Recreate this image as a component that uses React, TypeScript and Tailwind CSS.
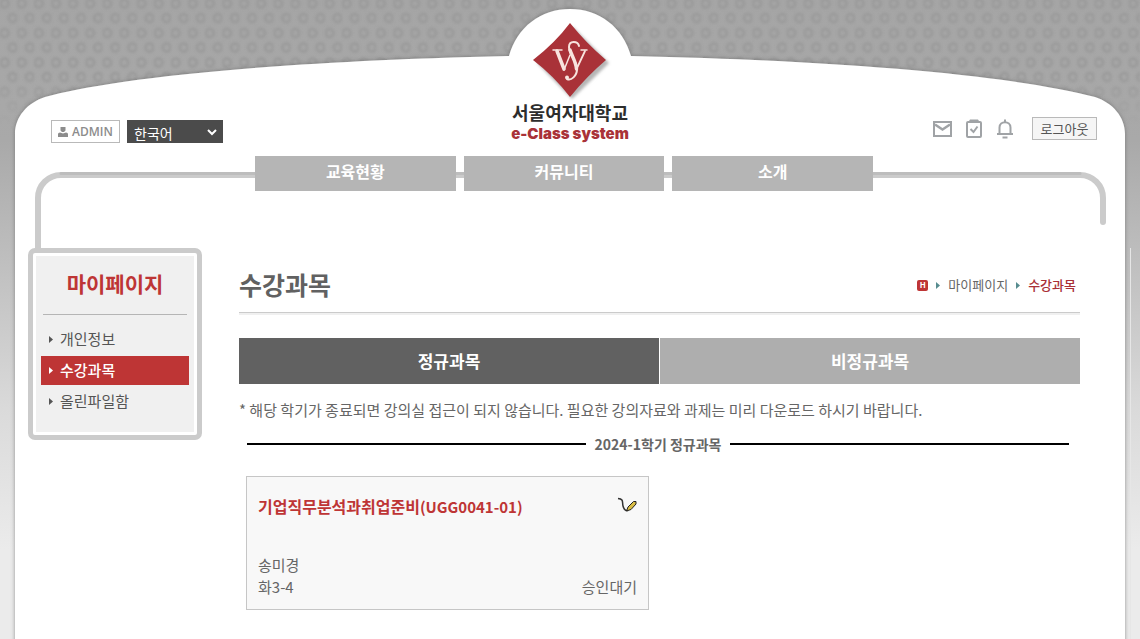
import { useState } from "react";

interface ICourse {
  id: string;
  name: string;
  professor: string;
  time: string;
  status: string;
}

const NAV_ITEMS = ["교육현황", "커뮤니티", "소개"];
const SIDE_ITEMS = ["개인정보", "수강과목", "올린파일함"];
const TABS = ["정규과목", "비정규과목"];

const COURSES: ICourse[] = [
  {
    id: "UGG0041-01",
    name: "기업직무분석과취업준비",
    professor: "송미경",
    time: "화3-4",
    status: "승인대기",
  },
];

const Backdrop = () => (
  <svg
    className="absolute inset-0 h-full w-full"
    viewBox="0 0 1140 639"
    preserveAspectRatio="none"
    aria-hidden="true"
  >
    <defs>
      <linearGradient id="side" x1="0" y1="0" x2="0" y2="1">
        <stop offset="0" stopColor="#a5a5a5" />
        <stop offset="0.22" stopColor="#a9a9a9" />
        <stop offset="0.42" stopColor="#c0c0c0" />
        <stop offset="0.64" stopColor="#dadada" />
        <stop offset="0.86" stopColor="#ebebeb" />
      </linearGradient>
      <linearGradient id="fade" x1="0" y1="0" x2="0" y2="1">
        <stop offset="0.6" stopColor="#fff" />
        <stop offset="1" stopColor="#000" />
      </linearGradient>
      <pattern id="rings" width="17.1" height="29.5" patternUnits="userSpaceOnUse">
        <g fill="none" stroke="#9b9b9b" strokeWidth="3">
          <circle cx="4.6" cy="5.500" r="4" />
          <circle cx="12.7" cy="20" r="4" />
        </g>
      </pattern>
      <mask id="ringFade">
        <rect width="1140" height="125" fill="url(#fade)" />
      </mask>
      <filter id="soft">
        <feGaussianBlur stdDeviation="0.8" />
      </filter>
      <filter id="edge" x="-5%" y="-5%" width="110%" height="110%">
        <feDropShadow dx="0" dy="0" stdDeviation="2" floodColor="#555" floodOpacity="0.6" />
      </filter>
    </defs>
    <rect width="1140" height="639" fill="url(#side)" />
    <g mask="url(#ringFade)">
      <rect y="-2" width="1140" height="127" fill="url(#rings)" filter="url(#soft)" transform="translate(0 -2)" />
    </g>
    <path
      filter="url(#edge)"
      fill="#fff"
      d="M15 660V134C15 117 27 103 45 97C100 82 240 62 509 56C517 27 541 9 570 9S623 27 631 56C900 62 1040 82 1095 97C1113 103 1125 117 1125 134V660Z"
    />
    <path d="M1130.500 248V639" stroke="#e6e6e6" strokeWidth="1" />
    <g fill="none" strokeLinecap="round">
      <path d="M38 260V198A23 23 0 0 1 61 175H1080A23 23 0 0 1 1103 198V222" stroke="#cbcbcb" strokeWidth="6" />
      <path d="M61 173.500H1080" stroke="#bdbdbd" strokeWidth="3" />
    </g>
  </svg>
);

const Logo = () => (
  <a href="#" className="flex flex-col items-center" aria-label="서울여자대학교 e-Class system">
    <svg width="84" height="83" viewBox="0 0 84 83" aria-hidden="true">
      <defs>
        <filter id="logoShadow">
          <feGaussianBlur stdDeviation="1.500" />
        </filter>
      </defs>
      <path d="M45 8L81 44L44 80L9 44Z" fill="#b5b5b5" filter="url(#logoShadow)" />
      <path d="M42 4Q58 24 78 41Q59 57 42 78Q26 57 5 41Q27 24 42 4Z" fill="#a93238" />
      <g fill="none" stroke="#f8e4de" strokeLinecap="round">
        <path d="M25 31H34M53 31H59" strokeWidth="1.500" />
        <path d="M29 32L36 50" strokeWidth="3.500" />
        <path d="M36 51L42 36" strokeWidth="1.500" />
        <path d="M51 27C50 22 41 21 41 28C41 36 49 42 49 50C49 57 43 62 39 60" strokeWidth="2" />
        <path d="M42 31C44 37 48 43 48.500 50" strokeWidth="3.500" />
        <path d="M49 49L57 32" strokeWidth="1.800" />
      </g>
      <circle cx="39" cy="58.500" r="2" fill="#f8e4de" />
    </svg>
    <span className="text-[18px] font-bold leading-[20px] text-[#2d2d2d]">서울여자대학교</span>
    <span className="font-[Inter,sans-serif] text-[15px] font-black leading-[24px] text-[#a93238]">
      e-Class system
    </span>
  </a>
);

const Arrow = ({ className }: { className: string }) => (
  <svg className={className} width="4" height="7" viewBox="0 0 4 7" fill="currentColor" aria-hidden="true">
    <path d="M0 0L4 3.500L0 7Z" />
  </svg>
);

const Header = () => (
  <header className="flex h-[148px] items-start justify-between px-[43px]">
    <div className="flex flex-1 gap-[7px] pt-[120px]">
      <button className="ml-2 flex h-[23px] w-[69px] items-center justify-center gap-1 border border-[#b9b9b9] bg-white font-['Open_Sans',sans-serif] text-[12px] font-semibold text-[#8c8c8c]">
        <svg width="10" height="10" viewBox="0 0 10 10" fill="currentColor" aria-hidden="true">
          <path d="M2.500 0H7.500V3.500L6 5H4L2.500 3.500ZM0 10V7Q0 5.500 2 5.500L5 6.500L8 5.500Q10 5.500 10 7V10Z" />
        </svg>
        ADMIN
      </button>
      <div className="relative h-[23px]">
        <select
          aria-label="언어"
          className="block h-[23px] w-[96px] appearance-none bg-[#4b4b4b] pl-[7px] pt-[2px] text-[14px] leading-[20px] text-white"
        >
          <option>한국어</option>
        </select>
        <svg className="pointer-events-none absolute right-[6px] top-[9px]" width="10" height="7" viewBox="0 0 10 7" aria-hidden="true">
          <path d="M1 1L5 5L9 1" fill="none" stroke="#fff" strokeWidth="2" />
        </svg>
      </div>
    </div>
    <div className="pt-[19px]">
      <Logo />
    </div>
    <div className="flex flex-1 items-center justify-end gap-[13px] pt-[117px] text-[#a0a3a6]">
      <button aria-label="쪽지">
        <svg width="19" height="16" viewBox="0 0 19 16" fill="none" stroke="currentColor" strokeWidth="2" aria-hidden="true">
          <path d="M1 1H18V15H1Z" />
          <path d="M2 3.500L9.500 8.500L17 3.500" strokeWidth="2.500" />
        </svg>
      </button>
      <button aria-label="할 일">
        <svg width="18" height="20" viewBox="0 0 18 20" fill="none" stroke="currentColor" strokeWidth="2" aria-hidden="true">
          <rect x="2" y="3" width="14" height="15" rx="1" />
          <path d="M5.500 10L8.500 13L12.500 7.500" />
          <path d="M5 0.500H13L15 3.500H3Z" fill="currentColor" stroke="none" />
        </svg>
      </button>
      <button aria-label="알림">
        <svg width="18" height="20" viewBox="0 0 18 20" fill="none" stroke="currentColor" strokeWidth="2" aria-hidden="true">
          <path d="M1 15H17M3.500 15V8.500C3.500 1.500 14.500 1.500 14.500 8.500V15M9 0.500V3" />
          <path d="M6.500 18.500H11.500" />
        </svg>
      </button>
      <button className="ml-[5px] h-[23px] w-[65px] border border-[#b9b9b9] bg-[#f5f5f5] text-[13px] leading-[18px] text-[#555]">
        로그아웃
      </button>
    </div>
  </header>
);

const App = () => {
  const [tab, setTab] = useState(TABS[0]);
  const [menu, setMenu] = useState(SIDE_ITEMS[1]);

  return (
    <div className="relative min-h-screen overflow-hidden font-['Noto_Sans_CJK_KR',sans-serif] text-[#666]">
      <Backdrop />
      <div className="relative">
        <Header />
        <nav className="mt-2 flex gap-2 pl-[255px] pr-[267px]">
          {NAV_ITEMS.map((item) => (
            <a
              key={item}
              href="#"
              className="h-[35px] flex-1 bg-[#b5b5b5] text-center text-[16px] font-bold leading-[30px] text-white"
            >
              {item}
            </a>
          ))}
        </nav>

        <div className="flex items-start gap-[37px] pl-7 pr-[60px] pt-[57px]">
          <aside className="w-[174px] shrink-0 rounded-[7px] border-[5px] border-[#cbcbcb] bg-white p-[3px]">
            <div className="bg-[#f0f0f0] px-[5px] pb-4">
              <h2 className="mx-[2px] mb-[10px] h-[59px] border-b border-[#b5b5b5] text-center text-[21px] font-bold leading-[54px] text-[#be3535]">
                마이페이지
              </h2>
              <ul className="flex flex-col gap-[2px]">
                {SIDE_ITEMS.map((item) => (
                  <li key={item}>
                    <a
                      href="#"
                      onClick={() => setMenu(item)}
                      className={`flex h-[29px] items-center gap-[7px] pl-2 text-[15px] ${
                        menu === item ? "bg-[#be3535] font-medium text-white" : "text-[#555]"
                      }`}
                    >
                      <Arrow className="h-[7px] w-[4px]" />
                      {item}
                    </a>
                  </li>
                ))}
              </ul>
            </div>
          </aside>

          <main className="min-w-0 flex-1">
            <div className="flex h-[65px] items-center justify-between border-b border-[#cbcbcb] pr-1 pt-[10px] shadow-[0_2px_0_#f0f0f0]">
              <h1 className="text-[25px] font-bold text-[#616161]">수강과목</h1>
              <div className="flex items-center text-[13px]">
                <a href="#" className="flex h-[11px] w-[11px] items-center justify-center rounded-[2px] bg-[#be3535] text-[8px] font-bold text-white">
                  H
                </a>
                <Arrow className="mx-2 text-[#568c8f]" />
                <a href="#">마이페이지</a>
                <Arrow className="mx-2 text-[#568c8f]" />
                <span className="font-medium text-[#a92f36]">수강과목</span>
              </div>
            </div>

            <div className="mt-[25px] flex gap-px">
              {TABS.map((item) => (
                <button
                  key={item}
                  onClick={() => setTab(item)}
                  className={`h-[46px] flex-1 text-[17px] font-bold leading-[22px] text-white ${
                    tab === item ? "bg-[#616161]" : "bg-[#aeaeae]"
                  }`}
                >
                  {item}
                </button>
              ))}
            </div>

            <p className="mt-4 text-[15px] leading-[20px]">
              * 해당 학기가 종료되면 강의실 접근이 되지 않습니다. 필요한 강의자료와 과제는 미리 다운로드 하시기 바랍니다.
            </p>

            <h3 className="mt-[14px] flex items-center gap-[9px] pl-2 pr-[11px] text-[14px] font-bold leading-[20px]">
              <span className="h-[2px] flex-1 bg-black" />
              2024-1학기 정규과목
              <span className="h-[2px] flex-1 bg-black" />
            </h3>

            <div className="mt-[22px] grid grid-cols-2 pl-[7px] pr-[28px]">
              {COURSES.map((course) => (
                <section
                  key={course.id}
                  className="flex h-[134px] flex-col justify-between border border-[#c6c6c6] bg-[#f8f8f8] px-[11px] pb-[11px] pt-[17px]"
                >
                  <div className="flex items-start justify-between">
                    <a href="#" className="text-[16px] font-bold leading-[24px] text-[#be3535]">
                      {course.name}
                      <span className="font-['Noto_Sans_CJK_KR',sans-serif] text-[15px]">({course.id})</span>
                    </a>
                    <svg className="mt-[3px]" width="20" height="16" viewBox="0 0 20 16" aria-hidden="true">
                      <path d="M1 1.500C7 2 5 5 6 9C7 13 9 14 11 13.500" fill="none" stroke="#333" strokeWidth="1.500" />
                      <path d="M9.500 14L11 10L16.500 4.500L19 4.500V7L14 12.500Z" fill="#d9bd45" stroke="#222" strokeWidth="1" />
                    </svg>
                  </div>
                  <div className="flex items-end justify-between text-[15px] leading-[22px]">
                    <div>
                      <p>{course.professor}</p>
                      <p>{course.time}</p>
                    </div>
                    <p>{course.status}</p>
                  </div>
                </section>
              ))}
            </div>
          </main>
        </div>
      </div>
    </div>
  );
};

export default App;
